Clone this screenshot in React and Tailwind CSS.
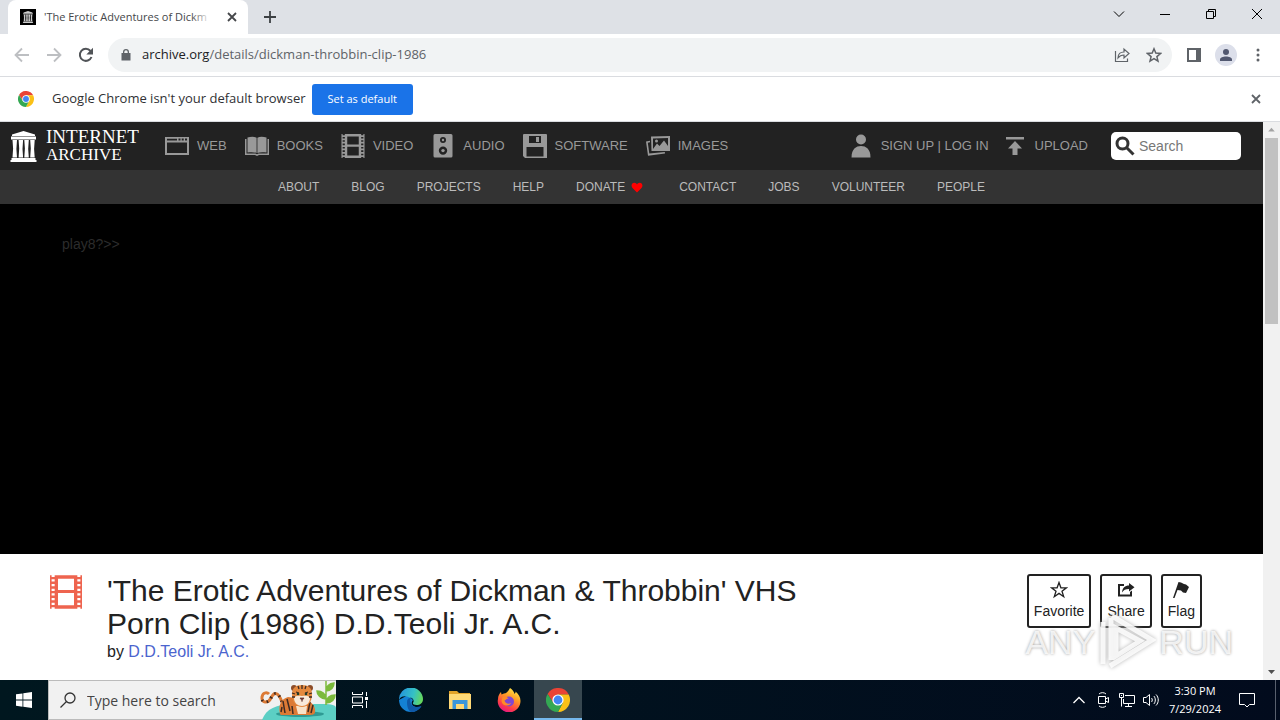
import React, { useState } from 'react';

const ChromeLogo = ({ className }) => (
    <svg viewBox="0 0 24 24" className={className}>
        <path d="M12 6.5H22.7A12 12 0 0 0 1.6 6L7.2 14.8Z" fill="#ea4335" />
        <path d="M16.8 14.8L12 24A12 12 0 0 0 22.7 6.5H12Z" fill="#fbc116" />
        <path d="M7.2 14.8L1.6 6A12 12 0 0 0 12 24L16.8 14.8Z" fill="#34a853" />
        <circle cx="12" cy="12" r="5.6" fill="#fff" />
        <circle cx="12" cy="12" r="4.4" fill="#4285f4" />
    </svg>
);

const TempleIcon = ({ className }) => (
    <svg viewBox="0 0 27 31" className={className} fill="currentColor">
        <path d="M13.5 0L25 3.6V5H2V3.6ZM1 5.5h25v3H1zM1.5 27h24v2h1v2H.5v-2h1z" />
        <path d="M2.500 9h4.500l-.6 9 .6 8.500h-4.500l.6-9zM8.600 9h4.500l-.6 9 .6 8.500h-4.500l.6-9zM14.300 9h4.500l-.6 9 .6 8.500h-4.500l.6-9zM20.200 9h4.500l-.6 9 .6 8.500h-4.500l.6-9z" />
    </svg>
);

const FilmIcon = ({ className }) => (
    <svg viewBox="0 0 24 25" className={className} fill="currentColor">
        <path fillRule="evenodd" d="M3.500 0h17v25h-17zM6 2.500v8.500h12V2.500zM6 13.300v9.200h12v-9.200z" />
        <path d="M0 0h1.200v25H0zM22.800 0H24v25h-1.200zM0 1.200h4v1.800H0zM0 4.700h4v1.800H0zM0 8.200h4V10H0zM0 11.700h4v1.800H0zM0 15.200h4V17H0zM0 18.700h4v1.800H0zM0 22.200h4V24H0zM20 1.200h4v1.800h-4zM20 4.700h4v1.800h-4zM20 8.200h4V10h-4zM20 11.700h4v1.800h-4zM20 15.200h4V17h-4zM20 18.700h4v1.800h-4zM20 22.200h4V24h-4z" />
    </svg>
);

const WebIcon = () => (
    <svg viewBox="0 0 24 24" className="w-6 h-6" fill="currentColor">
        <path fillRule="evenodd" d="M0 3h24v18H0zM2 8.500v10.500h20V8.500zM2 4.800v1.700h10V4.800zM13.500 4.500v2h2v-2zM16.700 4.500v2h2v-2zM20 4.500v2h2v-2z" />
    </svg>
);

const BooksIcon = () => (
    <svg viewBox="0 0 24 24" className="w-6 h-6" fill="currentColor">
        <path d="M2.500 3.500C6 2.600 9.500 2.600 11.600 3.700V19C9 18 6 18 2.500 18.500zM21.500 3.500C18 2.600 14.500 2.600 12.400 3.700V19C15 18 18 18 21.500 18.500z" />
        <path d="M0 5h1.500v14.500H10.500L12 20.300l1.500-.8h9V5H24v16H14l-2 1-2-1H0z" />
    </svg>
);

const AudioIcon = () => (
    <svg viewBox="0 0 24 24" className="w-6 h-6" fill="currentColor">
        <path fillRule="evenodd" d="M4 0h16a1.500 1.500 0 0 1 1.500 1.500v20.500a1.500 1.500 0 0 1-1.500 1.500H4A1.500 1.500 0 0 1 2.500 22V1.500A1.500 1.500 0 0 1 4 0zM12 3a3 3 0 1 0 0 6 3 3 0 0 0 0-6zM12 12.400a4.200 4.200 0 1 0 0 8.400 4.200 4.200 0 0 0 0-8.400z" />
        <circle cx="12" cy="6" r="1.200" />
        <circle cx="12" cy="16.600" r="1.700" />
    </svg>
);

const SoftwareIcon = () => (
    <svg viewBox="0 0 24 24" className="w-6 h-6" fill="currentColor">
        <path fillRule="evenodd" d="M1 0h22a1 1 0 0 1 1 1v23H2l-2-2V1a1 1 0 0 1 1-1zM6 2v7h12V2zM3.500 13v9.500h17V13z" />
        <path d="M13 3h3v5h-3z" />
    </svg>
);

const ImagesIcon = () => (
    <svg viewBox="0 0 24 24" className="w-6 h-6" fill="currentColor">
        <path fillRule="evenodd" d="M5 2.500L24 2v15H5.500zM7 4.500v10.500h15V4z" />
        <path d="M7 15l4-5.500 2.500 2.500 4.500-5.500L22 12v3z" />
        <circle cx="10.500" cy="7" r="1.500" />
        <path d="M0 7.500l4-.8v1.600l-2.200.5L3.300 19.500l15.500-1.600.2 1.700L2 21.800z" />
    </svg>
);

const UserIcon = () => (
    <svg viewBox="0 0 24 24" className="w-6 h-6" fill="currentColor">
        <circle cx="12" cy="5.500" r="5" />
        <path d="M2.500 23.500C2.500 15 7 12 12 12s9.500 3 9.500 11.500z" />
    </svg>
);

const UploadIcon = () => (
    <svg viewBox="0 0 24 24" className="w-6 h-6" fill="currentColor">
        <path d="M3 3h18v2.500H3zM12 7l7 7.500h-4.500V21h-5v-6.500H5z" />
    </svg>
);

const CloseIcon = ({ className }) => (
    <svg viewBox="0 0 12 12" className={className} fill="none" stroke="currentColor" strokeWidth="1.800">
        <path d="M2 2l8 8M10 2l-8 8" />
    </svg>
);

const mediaLinks = [
    { label: 'WEB', icon: <WebIcon /> },
    { label: 'BOOKS', icon: <BooksIcon /> },
    { label: 'VIDEO', icon: <FilmIcon className="w-6 h-6" /> },
    { label: 'AUDIO', icon: <AudioIcon /> },
    { label: 'SOFTWARE', icon: <SoftwareIcon /> },
    { label: 'IMAGES', icon: <ImagesIcon /> },
];

const aboutLinks = ['ABOUT', 'BLOG', 'PROJECTS', 'HELP', 'DONATE', 'CONTACT', 'JOBS', 'VOLUNTEER', 'PEOPLE'];

const TabStrip = () => (
    <div className="flex h-[34px] bg-[#dee1e6] pl-2">
        <div className="flex items-center w-60 bg-white rounded-t-lg pl-3 pr-[6px]">
            <span className="flex items-center justify-center w-4 h-4 bg-black text-[#ccc] shrink-0">
                <TempleIcon className="w-3 h-3" />
            </span>
            <div className="relative ml-2 whitespace-nowrap text-[11px] text-[#45474a]">
                'The Erotic Adventures of Dickm
                <div className="absolute inset-y-0 right-0 w-4 bg-gradient-to-r from-transparent to-white/80"></div>
            </div>
            <button aria-label="Close tab" className="flex items-center justify-center w-5 h-5 ml-auto text-[#45474a]">
                <CloseIcon className="w-3 h-3" />
            </button>
        </div>
        <button aria-label="New tab" className="flex items-center justify-center w-7 ml-2 text-[#3c4043]">
            <svg viewBox="0 0 12 12" className="w-3 h-3" stroke="currentColor" strokeWidth="1.800"><path d="M6 0v12M0 6h12" /></svg>
        </button>
        <div className="flex ml-auto h-7 text-black">
            <button aria-label="Search tabs" className="flex items-center justify-center w-[46px]">
                <svg viewBox="0 0 12 12" className="w-3 h-3" fill="none" stroke="currentColor"><path d="M1 3.500l5 5 5-5" /></svg>
            </button>
            <button aria-label="Minimize" className="flex items-center justify-center w-[46px]">
                <svg viewBox="0 0 10 10" className="w-[10px] h-[10px]" stroke="currentColor"><path d="M0 5.500h10" /></svg>
            </button>
            <button aria-label="Restore" className="flex items-center justify-center w-[46px]">
                <svg viewBox="0 0 10 10" className="w-[10px] h-[10px]" fill="none" stroke="currentColor"><path d="M.5 2.500h7v7h-7zM2.500 2.500v-2h7v7h-2" /></svg>
            </button>
            <button aria-label="Close window" className="flex items-center justify-center w-[46px]">
                <svg viewBox="0 0 10 10" className="w-[10px] h-[10px]" stroke="currentColor"><path d="M0 0l10 10M10 0L0 10" /></svg>
            </button>
        </div>
    </div>
);

const Toolbar = () => (
    <div className="flex items-center h-[43px] bg-white border-b border-[#dadce0] px-[6px] text-[#5f6368]">
        <button aria-label="Back" className="flex items-center justify-center w-8 h-8 text-[#bdbfc2]">
            <svg viewBox="0 0 16 16" className="w-4 h-4" fill="none" stroke="currentColor" strokeWidth="1.800"><path d="M15 8H2M8 1.500L1.500 8 8 14.500" /></svg>
        </button>
        <button aria-label="Forward" className="flex items-center justify-center w-8 h-8 text-[#bdbfc2]">
            <svg viewBox="0 0 16 16" className="w-4 h-4" fill="none" stroke="currentColor" strokeWidth="1.800"><path d="M1 8h13M8 1.500L14.500 8 8 14.500" /></svg>
        </button>
        <button aria-label="Reload" className="flex items-center justify-center w-8 h-8 text-[#505357]">
            <svg viewBox="0 0 16 16" className="w-4 h-4" fill="none" stroke="currentColor" strokeWidth="2"><path d="M13.500 10A6 6 0 1 1 12.500 4" /><path d="M15 .8v6.700H8.300z" fill="currentColor" stroke="none" /></svg>
        </button>
        <div className="flex items-center flex-1 h-[34px] mx-[6px] pl-3 pr-[2px] bg-[#f1f3f4] rounded-full">
            <svg viewBox="0 0 12 14" className="w-3 h-[14px] shrink-0" fill="#5f6368"><path fillRule="evenodd" d="M1.500 5H3V4a3 3 0 0 1 6 0v1h1.500v7.500h-9zM4.300 5h3.400V4a1.700 1.700 0 0 0-3.400 0z" /></svg>
            <div className="flex-1 ml-[10px] text-[13px] whitespace-nowrap">
                <span className="text-[#202124]">archive.org</span>/details/dickman-throbbin-clip-1986
            </div>
            <button aria-label="Share this page" className="flex items-center justify-center w-8 h-8">
                <svg viewBox="0 0 16 16" className="w-4 h-4" fill="none" stroke="currentColor" strokeWidth="1.200"><path d="M1.500 4v10.500h12v-3M4 11C4 7 6.500 5 10 5V2l5 4.500-5 4.500V8C7.500 8 5.500 9 4 11z" /></svg>
            </button>
            <button aria-label="Bookmark this tab" className="flex items-center justify-center w-8 h-8">
                <svg viewBox="0 0 16 16" className="w-4 h-4" fill="none" stroke="currentColor" strokeWidth="1.500"><path d="M8 1.800l1.800 4.300 4.700.4-3.600 3.100 1.100 4.600L8 11.700l-4 2.500 1.100-4.600-3.600-3.100 4.700-.4z" /></svg>
            </button>
        </div>
        <button aria-label="Side panel" className="flex items-center justify-center w-8 h-8">
            <svg viewBox="0 0 14 14" className="w-[14px] h-[14px]" fill="currentColor"><path fillRule="evenodd" d="M0 0h14v14H0zM2 2v10h7V2z" /></svg>
        </button>
        <button aria-label="Profile" className="flex items-center justify-center w-8 h-8">
            <span className="flex items-center justify-center w-[22px] h-[22px] rounded-full bg-[#dcdfea] text-[#525870]">
                <svg viewBox="0 0 14 14" className="w-[14px] h-[14px]" fill="currentColor"><circle cx="7" cy="4" r="3" /><path d="M1 13v-1.500C1 9.500 4 8.500 7 8.500s6 1 6 3V13z" /></svg>
            </span>
        </button>
        <button aria-label="Menu" className="flex items-center justify-center w-8 h-8">
            <svg viewBox="0 0 4 14" className="w-1 h-[14px]" fill="currentColor"><circle cx="2" cy="2" r="1.500" /><circle cx="2" cy="7" r="1.500" /><circle cx="2" cy="12" r="1.500" /></svg>
        </button>
    </div>
);

const InfoBar = () => (
    <div className="flex items-center h-[45px] bg-white border-b border-[#dadce0] px-[18px]">
        <ChromeLogo className="w-4 h-4" />
        <span className="ml-[18px] text-[13px] text-[#303134] whitespace-nowrap">Google Chrome isn't your default browser</span>
        <button className="ml-[6px] px-4 h-[31px] rounded-[3px] bg-[#1a73e8] text-white text-[11px] whitespace-nowrap">Set as default</button>
        <button aria-label="Dismiss" className="ml-auto text-[#5f6368]">
            <CloseIcon className="w-3 h-3" />
        </button>
    </div>
);

const SiteHeader = () => {
    const [query, setQuery] = useState('');

    return (
        <header>
            <nav className="flex items-center h-12 bg-[#222] pl-[10px] pr-[22px] text-[13px] text-[#999]">
                <a href="#home" className="flex items-center gap-[9px] text-white">
                    <TempleIcon className="w-[27px] h-[31px]" />
                    <span className="block w-24 font-['Liberation_Serif',serif] leading-[18px] whitespace-nowrap">
                        <span className="block text-[19px] leading-[18px]">INTERNET</span>
                        <span className="block text-[17px] leading-[18px]">ARCHIVE</span>
                    </span>
                </a>
                <div className="flex gap-[18px] ml-[23px]">
                    {mediaLinks.map(({ label, icon }) => (
                        <a key={label} href="#media" className="flex items-center gap-2">
                            {icon}
                            {label}
                        </a>
                    ))}
                </div>
                <div className="flex items-center ml-auto">
                    <a href="#login" className="flex items-center gap-2 whitespace-nowrap"><UserIcon />SIGN UP | LOG IN</a>
                    <a href="#upload" className="flex items-center gap-2 ml-[14px]"><UploadIcon />UPLOAD</a>
                    <label className="flex items-center w-[130px] h-7 ml-[23px] pl-1 rounded-[5px] bg-white text-[#333] text-[14px]">
                        <svg viewBox="0 0 20 20" className="w-5 h-5 shrink-0" fill="none" stroke="currentColor" strokeWidth="3"><circle cx="7.500" cy="7.500" r="5.500" /><path d="M11.500 11.500l7 7" /></svg>
                        <input
                            aria-label="Search"
                            type="text"
                            value={query}
                            onChange={e => setQuery(e.target.value)}
                            placeholder="Search"
                            className="w-full ml-1 outline-none placeholder:text-[#777]"
                        />
                    </label>
                </div>
            </nav>
            <nav className="flex items-center justify-center gap-8 h-[34px] bg-[#333] text-[12px] text-[#bbb]">
                {aboutLinks.map(label => (
                    <a key={label} href="#about" className="flex items-center gap-[6px]">
                        {label}
                        {label === 'DONATE' && (
                            <svg viewBox="0 0 12 11" className="w-3 h-[11px] mr-1" fill="#f00"><path d="M6 10.500L1.500 6C-.5 3.500 1 .8 3.300.8 4.500.8 5.500 1.500 6 2.500 6.500 1.500 7.500.8 8.700.8 11 .8 12.500 3.500 10.500 6z" /></svg>
                        )}
                    </a>
                ))}
            </nav>
        </header>
    );
};

const ItemDetails = () => (
    <section className="flex items-start pt-5 pl-[50px] pr-[61px] text-[#222]">
        <FilmIcon className="w-8 h-9 shrink-0 text-[#ee644f]" />
        <div className="ml-[25px] max-w-[720px]">
            <h1 className="text-[30px] leading-[33px]">'The Erotic Adventures of Dickman &amp; Throbbin' VHS Porn Clip (1986) D.D.Teoli Jr. A.C.</h1>
            <p className="text-[16px] leading-[23px]">by <a href="#creator" className="text-[#4b64ce]">D.D.Teoli Jr. A.C.</a></p>
        </div>
        <div className="flex gap-[9px] ml-auto text-[14px]">
            <button className="flex flex-col items-center h-[54px] px-[5px] pt-[5px] border-2 border-[#222] rounded-[3px]">
                <svg viewBox="0 0 18 18" className="w-[18px] h-[18px]" fill="none" stroke="currentColor" strokeWidth="1.300"><path d="M9 1.500l1.900 5.300h5.600L12 10.200l1.700 5.500L9 12.400l-4.700 3.300L6 10.200 1.500 6.800h5.600z" /></svg>
                <span className="leading-6">Favorite</span>
            </button>
            <button className="flex flex-col items-center h-[54px] px-[5px] pt-[5px] border-2 border-[#222] rounded-[3px]">
                <svg viewBox="0 0 18 18" className="w-[18px] h-[18px]" fill="currentColor"><path d="M1 3h6v2H3v8.500h10V11l2-1.500v6H1z" /><path d="M12 2l5.500 4.300L12 10.500V8C8.500 8 6.500 9 5 11.500 5.300 7 8 4.500 12 4.500z" /></svg>
                <span className="leading-6">Share</span>
            </button>
            <button className="flex flex-col items-center h-[54px] px-[5px] pt-[5px] border-2 border-[#222] rounded-[3px]">
                <svg viewBox="0 0 18 18" className="w-[18px] h-[18px]" fill="currentColor"><path d="M6.500 1L9 1.500l3 1.500 2 .5L17 6l-3 6-3-.5-2-2-3.500-.5L2.500 17H1z" /></svg>
                <span className="leading-6">Flag</span>
            </button>
        </div>
    </section>
);

const Watermark = () => (
    <div className="absolute right-[30px] bottom-[8px] flex items-center gap-[3px] text-[34px] leading-[60px] text-white/80 [text-shadow:0_0_3px_#999] pointer-events-none">
        <span>ANY</span>
        <svg viewBox="0 0 58 60" className="w-[58px] h-[60px] drop-shadow-[0_0_2px_#aaa]" fill="none" stroke="#fff" strokeOpacity=".85" strokeWidth="5">
            <path d="M5 52V10M13 6v42M14 4L54 28 12 54M18 16v28l24-15z" />
        </svg>
        <span>RUN</span>
    </div>
);

const Scrollbar = () => (
    <div className="flex flex-col items-center w-[17px] bg-[#f1f1f1] shrink-0">
        <svg viewBox="0 0 17 17" className="w-[17px] h-4 shrink-0" fill="#a3a3a3"><path d="M8.500 6l3.500 4H5z" /></svg>
        <div className="w-[13px] h-1/3 bg-[#c1c1c1]"></div>
        <svg viewBox="0 0 17 17" className="w-[17px] h-[17px] mt-auto" fill="#505050"><path d="M5 7h7l-3.500 4z" /></svg>
    </div>
);

const TigerArt = () => (
    <svg viewBox="0 0 76 39" className="w-[76px] h-[39px]">
        <path d="M2 39C6 28 16 23 34 23h30c7 0 12 1 12 4v12z" fill="#5ccfc4" />
        <ellipse cx="40" cy="33" rx="24" ry="3" fill="#2f9a93" />
        <path d="M66 24V0M66 22c6 0 9-4 9-8-5 0-9 3-9 8zM66 18c-5 0-9-4-9-8 5 0 9 3 9 8zM66 10c5 0 8-4 8-8-5 0-8 4-8 8z" fill="#7cba3c" stroke="#7cba3c" strokeWidth="1.500" />
        <path d="M22 21C18 10 14 11 11 17S1 22 2 16s6-4 7-3" fill="none" stroke="#dc7a35" strokeWidth="3" />
        <path d="M22 21C18 10 14 11 11 17S1 22 2 16" fill="none" stroke="#3d2a22" strokeWidth="3" strokeDasharray="1.500 4" />
        <path d="M20 33c-2-9 1-15 8-17l16 2c8 2 12 8 11 13 0 3-4 3-7 3H24c-2 0-4 0-4-1z" fill="#dc7a35" />
        <path d="M23 20l2 12M27 18l3 12M22 26l-1 5M32 25l1 8M50 21l-2 10M53 24l-2 8M45 27l-1 6" stroke="#3d2a22" strokeWidth="1.500" fill="none" />
        <path d="M36 25h11l-1 8h-8z" fill="#f8e2c8" />
        <circle cx="34" cy="7" r="3" fill="#8b4c29" />
        <circle cx="50" cy="7" r="3" fill="#8b4c29" />
        <path d="M32 13c0-6 4-9 10-9s10 3 10 9c0 8-4 13-10 13s-10-5-10-13z" fill="#e58a3f" />
        <path d="M34 17c2-3 5-2 8-2s6-1 8 2c0 5-4 8-8 8s-8-3-8-8z" fill="#f8eadb" />
        <path d="M42 4v4M38 5l1 3M46 5l-1 3M32 12l3 1M52 12l-3 1M32 16l3 0M52 16l-3 0M36 11l3 1M48 11l-3 1" stroke="#3d2a22" strokeWidth="1.300" fill="none" />
        <circle cx="38" cy="13" r="1.300" fill="#22402c" />
        <circle cx="46" cy="13" r="1.300" fill="#22402c" />
        <path d="M40 17h4l-2 2.500zM42 19v2" fill="#7a3b3b" stroke="#5a2d25" strokeWidth=".7" />
    </svg>
);

const EdgeIcon = () => (
    <svg viewBox="0 0 24 24" className="w-6 h-6">
        <defs>
            <linearGradient id="edgeTop" x1="0" x2="1" y1=".3" y2=".5"><stop stopColor="#2493dd" /><stop offset=".6" stopColor="#35c1c5" /><stop offset="1" stopColor="#66d95c" /></linearGradient>
        </defs>
        <path d="M0 12A12 12 0 0 0 12 24c4 0 8-2 10-5.500-6 2.500-12-2-8-6.500L9 7z" fill="#1481d4" />
        <path d="M0 12A12 12 0 0 1 24 11c0 4-3 6-6.500 6-2.500 0-4-1-3.500-2.200 1.700-2 0-5.300-3.500-5.300C5 7 1 9 0 12z" fill="url(#edgeTop)" />
        <path d="M8 14c0-3 2-4.500 4-4-2 3 0 9 6 9 2 0 3.500-.5 4.700-1.200C20 22 16 24.500 12 24c-3-1.500-4-6-4-10z" fill="#0f59a8" />
    </svg>
);

const FolderIcon = () => (
    <svg viewBox="0 0 24 24" className="w-6 h-6">
        <path d="M1 3h8l2 2h11v5H1z" fill="#e2a329" />
        <path d="M1 6h22v15H1z" fill="#ffd976" />
        <path d="M4.500 12h15v9H16v-5H8v5H4.500z" fill="#3a97dc" />
    </svg>
);

const FirefoxIcon = () => (
    <svg viewBox="0 0 24 24" className="w-6 h-6">
        <defs>
            <linearGradient id="fox" x1=".8" x2=".3" y1="0" y2="1"><stop stopColor="#fff04a" /><stop offset=".4" stopColor="#ff9a24" /><stop offset=".75" stopColor="#ff3d47" /><stop offset="1" stopColor="#e31587" /></linearGradient>
        </defs>
        <path d="M1 11c0-3 1.500-5.500 3-7l.5 2.500L7 5.500C9 5.500 11 4 13 0c2.500 1.500 4 3.500 4.500 6 1-1 1.200-1.500 1-2.500C21.500 6 23.500 9 23.500 13A11.400 11.400 0 0 1 .7 13z" fill="url(#fox)" />
        <circle cx="12" cy="13.500" r="5" fill="#8046d2" />
        <path d="M5.500 9C8 8 10 9 11.500 10.500c-2 0-2.500 1.500-4 2 .5 3 4 4 6.500 2.500-1.500 4-9 3.500-9.500-2z" fill="#ff8b28" />
    </svg>
);

const Taskbar = () => (
    <footer className="flex h-10 bg-gradient-to-r from-[#00171f] to-[#020b1d] text-white shrink-0">
        <button aria-label="Start" className="flex items-center justify-center w-12">
            <svg viewBox="0 0 16 16" className="w-4 h-4" fill="currentColor"><path d="M0 2.300L6.500 1.400V7.600H0zM7.300 1.300L16 0v7.600H7.300zM0 8.400h6.500v6.300L0 13.800zM7.300 8.400H16V16l-8.700-1.200z" /></svg>
        </button>
        <label className="flex items-center w-72 bg-[#f1f1f1] border border-[#bbb] border-r-0 pl-[11px] text-[#333]">
            <svg viewBox="0 0 16 16" className="w-4 h-4 shrink-0" fill="none" stroke="currentColor" strokeWidth="1.300"><circle cx="10" cy="6" r="5" /><path d="M6.500 9.500L.5 15.500" /></svg>
            <input aria-label="Type here to search" type="text" placeholder="Type here to search" className="min-w-0 flex-1 ml-[11px] text-[14px] outline-none placeholder:text-[#444]" />
            <TigerArt />
        </label>
        <div className="flex gap-px">
            <button aria-label="Task view" className="flex items-center justify-center w-12 mr-[2px]">
                <svg viewBox="0 0 16 16" className="w-4 h-4" fill="none" stroke="currentColor"><path d="M.5 0v2.500h10V0M.5 16v-2.500h10V16M.5 5h10v6H.5zM14.500 0v4M14.500 9v7" /><path d="M13 5h3v3h-3z" fill="currentColor" stroke="none" /></svg>
            </button>
            <button aria-label="Edge" className="flex items-center justify-center w-12"><EdgeIcon /></button>
            <button aria-label="File Explorer" className="flex items-center justify-center w-12"><FolderIcon /></button>
            <button aria-label="Firefox" className="flex items-center justify-center w-12"><FirefoxIcon /></button>
            <button aria-label="Chrome" className="flex items-center justify-center w-12 pt-[2px] bg-[#37474f] border-b-2 border-[#76b9ed]"><ChromeLogo className="w-6 h-6" /></button>
        </div>
        <div className="flex items-center ml-auto">
            <button aria-label="Hidden icons" className="flex justify-center w-6">
                <svg viewBox="0 0 12 12" className="w-3 h-3" fill="none" stroke="currentColor" strokeWidth="1.300"><path d="M.5 9L6 3.500 11.500 9" /></svg>
            </button>
            <button aria-label="Camera" className="flex justify-center w-6">
                <svg viewBox="0 0 16 16" className="w-4 h-4" fill="none" stroke="currentColor"><path d="M3.500 4.500h7v7h-7zM10.500 7l3-1.500v5l-3-1.500M4 2C6 .2 9 .2 11 2M4 14c2 1.800 5 1.800 7 0" /></svg>
            </button>
            <button aria-label="Network" className="flex justify-center w-6">
                <svg viewBox="0 0 16 16" className="w-4 h-4" fill="none" stroke="currentColor"><path d="M6 3.500h9.500v8H4.500V7M9.500 11.500v3M6 14.500h7M.5 1.500h4v4h-4zM2.500 5.500v9M2 3.500h1" /></svg>
            </button>
            <button aria-label="Volume" className="flex justify-center w-6">
                <svg viewBox="0 0 16 16" className="w-4 h-4" fill="none" stroke="currentColor"><path d="M.5 5.500H3l3.500-3v11L3 10.500H.5zM8.500 6c1 1 1 3 0 4M10.800 4c2 2 2 6 0 8M13 2.500c3 3 3 8 0 11" /></svg>
            </button>
            <div className="w-16 text-center text-[11px] leading-[18px]">
                <div>3:30 PM</div>
                <div>7/29/2024</div>
            </div>
            <button aria-label="Notifications" className="flex justify-center w-10">
                <svg viewBox="0 0 16 16" className="w-4 h-4" fill="none" stroke="currentColor"><path d="M.5 1.500h15v11h-5L8 15l-2.500-2.500h-5z" /></svg>
            </button>
            <div className="w-[5px] h-10 ml-2 border-l border-[#59606e]"></div>
        </div>
    </footer>
);

const App = () => (
    <div className="flex flex-col min-h-screen bg-white font-['Open_Sans','Noto_Sans',sans-serif]">
        <TabStrip />
        <Toolbar />
        <InfoBar />
        <div className="flex flex-1">
            <main className="relative flex-1 min-w-0 font-['Liberation_Sans',Arial,sans-serif]">
                <SiteHeader />
                <div className="h-[350px] bg-black pt-[30px] pl-[62px] text-[14px] leading-5 text-[#2c2c2c]">play8?&gt;&gt;</div>
                <ItemDetails />
                <Watermark />
            </main>
            <Scrollbar />
        </div>
        <Taskbar />
    </div>
);

export default App;
